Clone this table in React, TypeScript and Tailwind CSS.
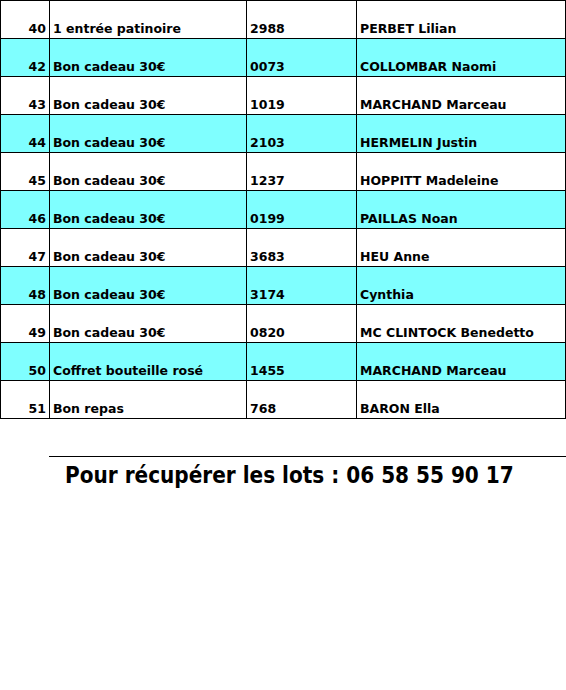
const rows = [
  { n: 40, lot: '1 entrée patinoire', ticket: '2988', name: 'PERBET Lilian' },
  { n: 42, lot: 'Bon cadeau 30€', ticket: '0073', name: 'COLLOMBAR Naomi' },
  { n: 43, lot: 'Bon cadeau 30€', ticket: '1019', name: 'MARCHAND Marceau' },
  { n: 44, lot: 'Bon cadeau 30€', ticket: '2103', name: 'HERMELIN Justin' },
  { n: 45, lot: 'Bon cadeau 30€', ticket: '1237', name: 'HOPPITT Madeleine' },
  { n: 46, lot: 'Bon cadeau 30€', ticket: '0199', name: 'PAILLAS Noan' },
  { n: 47, lot: 'Bon cadeau 30€', ticket: '3683', name: 'HEU Anne' },
  { n: 48, lot: 'Bon cadeau 30€', ticket: '3174', name: 'Cynthia' },
  { n: 49, lot: 'Bon cadeau 30€', ticket: '0820', name: 'MC CLINTOCK Benedetto' },
  { n: 50, lot: 'Coffret bouteille rosé', ticket: '1455', name: 'MARCHAND Marceau' },
  { n: 51, lot: 'Bon repas', ticket: '768', name: 'BARON Ella' },
];

export default function App() {
  return (
    <div className="w-[566px] h-[690px] bg-white text-black font-['DejaVu_Sans',sans-serif]">
      <table className="w-[566px] border-collapse table-fixed text-[12.5px] font-bold">
        <colgroup>
          <col className="w-[49px]" />
          <col className="w-[197px]" />
          <col className="w-[110px]" />
          <col />
        </colgroup>
        <tbody>
          {rows.map((r, i) => (
            <tr key={r.n} className={i % 2 === 1 ? 'bg-[#7fffff]' : 'bg-white'}>
              <td className="h-[38px] border-[1.5px] border-black align-bottom text-right pr-[3px] pb-[3px] leading-none">
                {r.n}
              </td>
              <td className="border-[1.5px] border-black align-bottom pl-[3px] pb-[3px] leading-none whitespace-nowrap">
                {r.lot}
              </td>
              <td className="border-[1.5px] border-black align-bottom pl-[3px] pb-[3px] leading-none">
                {r.ticket}
              </td>
              <td className="border-[1.5px] border-black align-bottom pl-[3px] pb-[3px] leading-none whitespace-nowrap">
                {r.name}
              </td>
            </tr>
          ))}
        </tbody>
      </table>
      <div className="mt-[37px] ml-[49px] border-t border-black pt-[4px] pl-[16px]">
        <p className="font-['DejaVu_Sans_Condensed','DejaVu_Sans',sans-serif] text-[22.3px] font-bold leading-[28px] whitespace-nowrap">
          Pour récupérer les lots : 06 58 55 90 17
        </p>
      </div>
    </div>
  );
}
